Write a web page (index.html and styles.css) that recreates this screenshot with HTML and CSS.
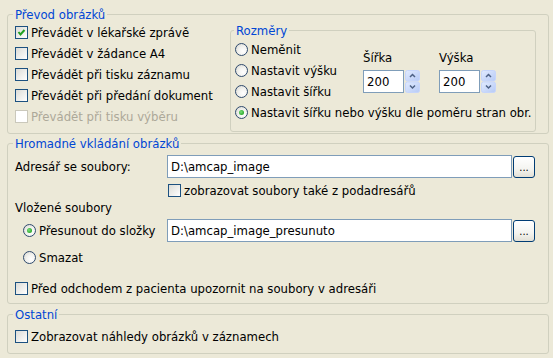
FILE: index.html
```html
<!DOCTYPE html>
<html lang="cs">
<head>
<meta charset="utf-8">
<title>Převod obrázků</title>
<link rel="stylesheet" href="styles.css">
</head>
<body>
<div class="page">
  <fieldset class="group g1">
    <legend>Převod obrázků</legend>
    <div class="g1-body">
      <div class="col">
        <div class="row"><span class="cb"><svg width="11" height="11" viewBox="0 0 11 11"><polyline points="2.5,5 4.5,7.5 8.5,3" fill="none" stroke="#21A121" stroke-width="2"/></svg></span><span>Převádět v lékařské zprávě</span></div>
        <div class="row"><span class="cb"></span><span>Převádět v žádance A4</span></div>
        <div class="row"><span class="cb"></span><span>Převádět při tisku záznamu</span></div>
        <div class="row"><span class="cb"></span><span>Převádět při předání dokument</span></div>
        <div class="row disabled"><span class="cb"></span><span>Převádět při tisku výběru</span></div>
      </div>
      <fieldset class="group g-size">
        <legend>Rozměry</legend>
        <div class="size-top">
          <div class="radios">
            <div class="row"><span class="rb"></span><span>Neměnit</span></div>
            <div class="row"><span class="rb"></span><span>Nastavit výšku</span></div>
            <div class="row"><span class="rb"></span><span>Nastavit šířku</span></div>
          </div>
          <div class="spin-field">
            <div class="spin-label">Šířka</div>
            <div class="spin"><span class="spin-input">200</span><svg class="spin-btns" width="15" height="23" viewBox="0 0 15 23"><defs><linearGradient id="sg" x1="0" y1="0" x2="1" y2="1"><stop offset="0" stop-color="#E2EBFE"/><stop offset="1" stop-color="#B6CAF6"/></linearGradient></defs><rect x="0.5" y="0.5" width="14" height="10.5" rx="2" fill="url(#sg)" stroke="#C6D5FB"/><rect x="0.5" y="12" width="14" height="10.5" rx="2" fill="url(#sg)" stroke="#C6D5FB"/><polyline points="5,7 7.5,4.5 10,7" fill="none" stroke="#4D6185" stroke-width="1.5"/><polyline points="5,15.5 7.5,18 10,15.5" fill="none" stroke="#4D6185" stroke-width="1.5"/></svg></div>
          </div>
          <div class="spin-field second">
            <div class="spin-label">Výška</div>
            <div class="spin"><span class="spin-input">200</span><svg class="spin-btns" width="15" height="23" viewBox="0 0 15 23"><rect x="0.5" y="0.5" width="14" height="10.5" rx="2" fill="url(#sg)" stroke="#C6D5FB"/><rect x="0.5" y="12" width="14" height="10.5" rx="2" fill="url(#sg)" stroke="#C6D5FB"/><polyline points="5,7 7.5,4.5 10,7" fill="none" stroke="#4D6185" stroke-width="1.5"/><polyline points="5,15.5 7.5,18 10,15.5" fill="none" stroke="#4D6185" stroke-width="1.5"/></svg></div>
          </div>
        </div>
        <div class="row"><span class="rb on"></span><span>Nastavit šířku nebo výšku dle poměru stran obr.</span></div>
      </fieldset>
    </div>
  </fieldset>

  <fieldset class="group g2">
    <legend>Hromadné vkládání obrázků</legend>
    <div class="field-row">
      <span class="field-label">Adresář se soubory:</span>
      <span class="text-input">D:\amcap_image</span>
      <span class="btn">...</span>
    </div>
    <div class="row sub-check"><span class="cb"></span><span>zobrazovat soubory také z podadresářů</span></div>
    <div class="section-label">Vložené soubory</div>
    <div class="field-row indent">
      <span class="field-label radio-label"><span class="rb on"></span><span>Přesunout do složky</span></span>
      <span class="text-input">D:\amcap_image_presunuto</span>
      <span class="btn">...</span>
    </div>
    <div class="row indent smazat"><span class="rb"></span><span>Smazat</span></div>
    <div class="row warn"><span class="cb"></span><span>Před odchodem z pacienta upozornit na soubory v adresáři</span></div>
  </fieldset>

  <fieldset class="group g3">
    <legend>Ostatní</legend>
    <div class="row g3-row"><span class="cb"></span><span>Zobrazovat náhledy obrázků v záznamech</span></div>
  </fieldset>
</div>
</body>
</html>
```

FILE: styles.css
```css
html, body {
  margin: 0;
  background: #ECE9D8;
}

body {
  font-family: "DejaVu Sans Condensed", "DejaVu Sans", sans-serif;
  font-stretch: condensed;
  font-size: 13px;
  color: #000;
}

.page {
  width: 553px;
  height: 358px;
  box-sizing: border-box;
  padding: 7px 4px 0 7px;
  overflow: hidden;
}

.group {
  margin: 0;
  border: 1px solid #D0D0BF;
  border-radius: 3px;
  padding: 0 12px 0 7px;
  min-width: 0;
}

.group > legend {
  padding: 0 2px;
  margin-left: -2px;
  color: #0046D5;
  line-height: 15px;
  white-space: nowrap;
}

.row {
  display: flex;
  align-items: center;
  gap: 3px;
  height: 21px;
  white-space: nowrap;
}

.disabled {
  color: #ACA899;
}

/* checkbox */
.cb {
  flex: none;
  width: 13px;
  height: 13px;
  box-sizing: border-box;
  border: 1px solid #1C5180;
  background: linear-gradient(135deg, #DCDCD7 0%, #F4F4F2 70%, #FFFFFF 100%);
  display: flex;
  align-items: center;
  justify-content: center;
}

.disabled .cb {
  border-color: #CAC8BB;
  background: #FFFFFF;
}

/* radio */
.rb {
  flex: none;
  width: 13px;
  height: 13px;
  box-sizing: border-box;
  border: 1px solid #2F4A6E;
  border-radius: 50%;
  background: radial-gradient(circle at 65% 65%, #FFFFFF 0%, #F2F2EF 45%, #D4D4CC 100%);
  display: flex;
  align-items: center;
  justify-content: center;
}

.rb.on::after {
  content: "";
  width: 5px;
  height: 5px;
  border-radius: 50%;
  background: radial-gradient(circle at 40% 40%, #7BE07B 0%, #21A121 80%);
}

/* group 1 */
.g1-body {
  display: flex;
  align-items: flex-start;
  padding-bottom: 1px;
}

.col {
  flex: 1;
  display: flex;
  flex-direction: column;
  min-width: 0;
}

.g-size {
  flex: none;
  width: 306px;
  box-sizing: border-box;
  margin-top: 1px;
  padding: 0 4px 8px 4px;
}

.g-size > legend {
  margin-left: -1px;
}

.size-top {
  display: flex;
  align-items: flex-start;
  margin-top: 1px;
}

.radios {
  width: 128px;
  display: flex;
  flex-direction: column;
}

.spin-field {
  display: flex;
  flex-direction: column;
  margin-top: 11px;
}

.spin-field.second {
  margin-left: 19px;
}

.spin-label {
  line-height: 16px;
  height: 16px;
  margin-bottom: 4px;
}

.spin {
  display: flex;
  align-items: center;
  gap: 1px;
}

.spin-input {
  width: 41px;
  height: 23px;
  box-sizing: border-box;
  border: 1px solid #7F9DB9;
  background: #FFFFFF;
  padding-left: 3px;
  line-height: 21px;
}

.spin-btns {
  display: block;
  flex: none;
}

/* group 2 */
.g2 {
  margin-top: 2px;
  padding-bottom: 5px;
}

.field-row {
  display: flex;
  align-items: center;
  height: 23px;
  margin-top: 4px;
  white-space: nowrap;
}

.field-label {
  width: 152px;
  flex: none;
}

.field-row.indent .field-label {
  width: 144px;
}

.radio-label {
  display: flex;
  align-items: center;
  gap: 3px;
}

.field-row.indent {
  padding-left: 8px;
  margin-top: 3px;
}

.text-input {
  width: 345px;
  height: 23px;
  box-sizing: border-box;
  border: 1px solid #7F9DB9;
  background: #FFFFFF;
  padding-left: 3px;
  line-height: 21px;
  flex: none;
}

.btn {
  flex: none;
  margin-left: 1px;
  width: 22px;
  height: 22px;
  box-sizing: border-box;
  border: 1px solid #003C74;
  border-radius: 3px;
  background: linear-gradient(#FFFFFF 0%, #F4F4F0 60%, #E3E0D6 100%);
  font-size: 11px;
  line-height: 22px;
  text-align: center;
  letter-spacing: 0;
}

.sub-check {
  height: 20px;
  margin-top: 2px;
  padding-left: 153px;
}

.section-label {
  height: 16px;
  line-height: 16px;
  margin-top: 0;
}

.row.indent {
  padding-left: 8px;
}

.smazat {
  height: 20px;
  margin-top: 5px;
}

.warn {
  height: 20px;
  margin-top: 11px;
}

/* group 3 */
.g3 {
  margin-top: 3px;
  padding-bottom: 7px;
}

.g3-row {
  height: 20px;
  margin-top: 4px;
}
```
